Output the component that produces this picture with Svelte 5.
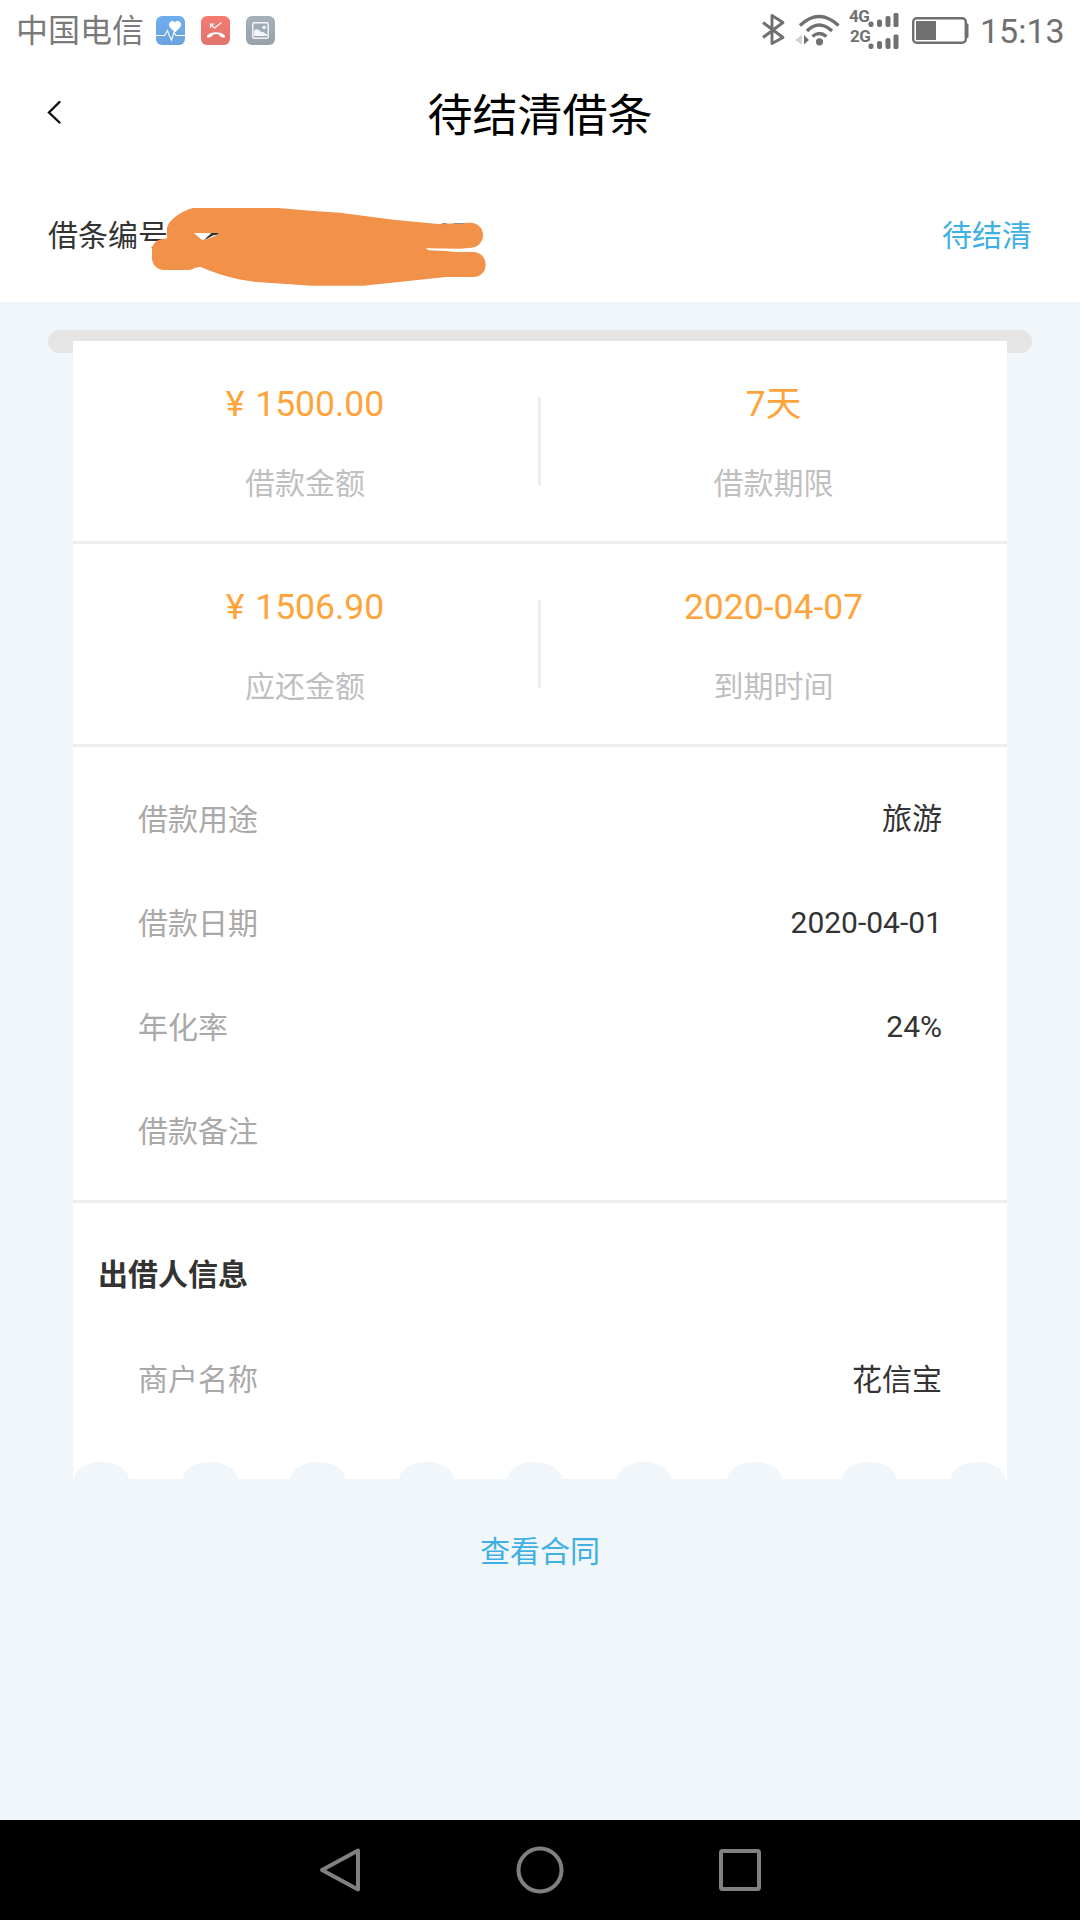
<script>
  const summary = [
    [
      { value: '¥ 1500.00', label: '借款金额' },
      { value: '7天', label: '借款期限' },
    ],
    [
      { value: '¥ 1506.90', label: '应还金额' },
      { value: '2020-04-07', label: '到期时间' },
    ],
  ];

  const details = [
    { label: '借款用途', value: '旅游' },
    { label: '借款日期', value: '2020-04-01' },
    { label: '年化率', value: '24%' },
    { label: '借款备注', value: '' },
  ];

  // centres of the scallops cut out of the lower edge of the card
  const scallops = [28.5, 137, 245, 353.5, 461.5, 571, 681.5, 796, 905];
</script>

<div class="screen">
  <header class="status">
    <span class="carrier">中国电信</span>
    <svg class="app" viewBox="0 0 29 29">
      <defs>
        <linearGradient id="blue" x2="0" y2="1"><stop stop-color="#70aeef" /><stop offset="1" stop-color="#6aa2dc" /></linearGradient>
      </defs>
      <rect width="29" height="29" rx="6" fill="url(#blue)" />
      <path d="M19 16.500L14 11.500C11 8 15.500 2.500 19 6.500C22.500 2.500 27.500 8 24 11.500Z" fill="#fff" />
      <path d="M0 19.500H8.500L9.500 18L11.500 14.500L13 19L15.500 24L18 16.500L20 19.500H29" fill="none" stroke="#fff" stroke-width="1.100" />
    </svg>
    <svg class="app" viewBox="0 0 29 29">
      <defs>
        <linearGradient id="red" x2="0" y2="1"><stop stop-color="#f47b72" /><stop offset="1" stop-color="#e0746e" /></linearGradient>
      </defs>
      <rect width="29" height="29" rx="6" fill="url(#red)" />
      <path d="M9.500 12V8H13.500M9.500 8L13.500 12L20.500 6.500" fill="none" stroke="#fff" stroke-width="1.200" />
      <path d="M6.200 19.500C9 15 21 15 23.800 19.500C24.500 21 23.500 22 22 21.500C19.500 20.800 18.500 20.300 18.300 18.800C16 18.200 14 18.200 11.800 18.800C11.500 20.300 10.500 20.800 8 21.500C6.500 22 5.500 21 6.200 19.500Z" fill="#fff" />
    </svg>
    <svg class="app" viewBox="0 0 29 29">
      <defs>
        <linearGradient id="grey" x2="0" y2="1"><stop stop-color="#a5b1b9" /><stop offset="1" stop-color="#98a1a9" /></linearGradient>
      </defs>
      <rect width="29" height="29" rx="6" fill="url(#grey)" />
      <rect x="6.800" y="6.800" width="15.400" height="15.400" rx="1.500" fill="none" stroke="#f3f5f6" stroke-width="1.500" />
      <path d="M8 14.500C10 12.500 12 13 14 15C15.500 16.500 17 15 21 18.500V20H8Z" fill="#f3f5f6" />
      <circle cx="18" cy="11.500" r="1.800" fill="#f3f5f6" />
    </svg>
    <svg class="system" viewBox="0 0 215 60">
      <g fill="none" stroke="#707070">
        <path d="M4 22.500L24 37.500L13 43.500V15.500L24 22.500L4 37.500" stroke-width="2.900" stroke-linejoin="round" />
        <path d="M41 25.500Q60 7.500 79.500 25.500M48 31Q60 19 73 31M53.500 36.500Q60 30.500 67.500 36.500" stroke-width="3.400" />
        <rect x="154.200" y="18.200" width="52.600" height="24.600" rx="3.500" stroke-width="2.400" />
      </g>
      <g fill="#707070">
        <circle cx="60.500" cy="41.800" r="3.600" />
        <path d="M45 35L50 40L45 44.500Z" />
        <path d="M43 35L36 40L43 44.500Z" fill="#d2d2d2" />
        <text x="90" y="22">4G</text>
        <text x="91" y="42">2G</text>
        <rect x="109.500" y="21.500" width="5" height="5.500" rx="2" />
        <rect x="118" y="19.500" width="5" height="7.500" rx="2" />
        <rect x="126.500" y="16" width="5" height="11" rx="2" />
        <rect x="134.500" y="13" width="5" height="14" rx="1.500" />
        <rect x="109.500" y="43.500" width="5" height="5.500" rx="2" />
        <rect x="118" y="41" width="5" height="8" rx="2" />
        <rect x="126.500" y="38" width="5" height="11" rx="2" />
        <rect x="134.500" y="34.500" width="5" height="14.500" rx="1.500" />
        <rect x="157" y="21" width="20" height="19" />
        <rect x="206.500" y="23.500" width="3" height="14.500" rx="1" />
      </g>
    </svg>
    <span class="clock">15:13</span>
  </header>

  <div class="title-bar">
    <svg class="back" viewBox="0 0 14 24"><path d="M12.500 2L2 12.500L12.500 22.500" /></svg>
    <h1>待结清借条</h1>
  </div>

  <div class="number-row">
    <span>借条编号</span>
    <span class="state">待结清</span>
    <svg class="redaction" viewBox="0 0 1440 360">
      <path class="trace" d="M522 150L545 128L568 129L562 134L550 136L530 147Z" />
      <path
        class="blob"
        fill-rule="evenodd"
        d="M490 54H745L850 63L930 68L1090 89L1225 102L1320 98C1345 98 1359 115 1359 135C1359 155 1345 172 1325 173L1290 176L1187 175L1196 181L1250 183L1275 186H1330C1353 187 1367 203 1367 224C1367 245 1352 261 1330 261H1248L1170 269L1000 287H845L680 276C610 268 560 251 512 231C495 231 490 239 475 240H402C380 240 366 222 366 205V180C366 160 383 147 400 147L411 145V115C415 90 455 62 490 54ZM492 129L515 149L522 149L545 129ZM522 150L545 129L568 129L562 134L535 146Z"
      />
      <path class="faint" d="M1234 103L1238 99H1248L1253 103ZM1272 99H1302V102H1272Z" />
    </svg>
  </div>

  <main>
    <div class="rail">
      <section class="card">
        {#each summary as pair}
          <div class="pair">
            {#each pair as cell}
              <div class="cell">
                <b>{cell.value}</b>
                <span>{cell.label}</span>
              </div>
            {/each}
          </div>
        {/each}
        <div class="details">
          {#each details as row}
            <div class="row"><span>{row.label}</span><em>{row.value}</em></div>
          {/each}
        </div>
        <div class="lender">
          <h2>出借人信息</h2>
          <div class="row"><span>商户名称</span><em>花信宝</em></div>
        </div>
        <svg class="edge" viewBox="0 0 934 17">
          {#each scallops as cx}
            <ellipse {cx} cy="18" rx="27.500" ry="18" />
          {/each}
        </svg>
      </section>
    </div>
    <a class="contract" href="#contract">查看合同</a>
  </main>

  <nav>
    <svg viewBox="0 0 50 50"><path d="M43 5.500V44.500L7 25Z" /></svg>
    <svg viewBox="0 0 50 50"><circle cx="25" cy="25" r="21.500" /></svg>
    <svg viewBox="0 0 50 50"><rect x="6" y="6" width="38" height="38" rx="1.500" /></svg>
  </nav>
</div>

<style>
  :global(body) {
    margin: 0;
  }
  .screen {
    width: 1080px;
    height: 1920px;
    display: flex;
    flex-direction: column;
    overflow: hidden;
    background: #fff;
    color: #333;
    font: 30px/1 Roboto, 'Noto Sans CJK SC', sans-serif;
  }
  svg {
    display: block;
    flex: none;
  }
  .status {
    height: 60px;
    display: flex;
    align-items: center;
    box-sizing: border-box;
    padding: 0 16px;
    color: #707070;
  }
  .carrier {
    width: 140px;
    padding-top: 3px;
    font-size: 32px;
    color: #7a7a7a;
    line-height: 57px;
  }
  .app {
    width: 29px;
    height: 29px;
    margin-right: 16px;
  }
  .system {
    width: 215px;
    height: 60px;
    margin-left: auto;
  }
  .system text {
    font: 700 17px Roboto, sans-serif;
    letter-spacing: -0.5px;
  }
  .clock {
    width: 84px;
    margin-left: 6px;
    padding-top: 3px;
    font-size: 34px;
    line-height: 57px;
    white-space: nowrap;
  }
  .title-bar {
    height: 110px;
    display: grid;
    grid-template: 110px / 48px 1fr 48px;
    align-items: center;
  }
  .back {
    width: 14px;
    height: 24px;
    justify-self: end;
    margin: 0 -13px 6px 0;
    fill: none;
    stroke: #111;
    stroke-width: 2.4;
    stroke-linecap: round;
  }
  h1 {
    align-self: start;
    margin: 0;
    color: #000;
    font-size: 45px;
    font-weight: 400;
    line-height: 114px;
    text-align: center;
  }
  .number-row {
    position: relative;
    height: 132px;
    display: flex;
    justify-content: space-between;
    box-sizing: border-box;
    padding: 0 48px;
    line-height: 132px;
  }
  .state,
  .contract {
    color: #3fb0e3;
    text-decoration: none;
  }
  .redaction {
    position: absolute;
    left: 30px;
    top: 20px;
    width: 480px;
    height: 120px;
  }
  .blob {
    fill: #f2924a;
  }
  .trace {
    fill: #333;
  }
  .faint {
    fill: #9a8a80;
  }
  main {
    flex: 1;
    display: flex;
    flex-direction: column;
    align-items: center;
    padding-top: 28px;
    background: #f1f6fb;
  }
  .rail {
    width: 984px;
    height: 23px;
    border-radius: 12px;
    background: #e5e5e5;
    margin-bottom: 1126px;
  }
  .card {
    width: 934px;
    height: 1138px;
    margin: 11px auto 0;
    background: #fff;
    display: flex;
    flex-direction: column;
  }
  .pair {
    display: grid;
    grid-template-columns: 1fr 1fr;
    height: 200px;
    border-bottom: 3px solid #ededed;
    background: linear-gradient(#ededed, #ededed) 465px 56px / 3px 88px no-repeat;
  }
  .cell {
    display: flex;
    flex-direction: column;
    align-items: center;
    padding-top: 42px;
  }
  .cell:first-child {
    padding-right: 3px;
    word-spacing: 2px;
  }
  .cell b {
    height: 79px;
    color: #ffa43b;
    font-size: 35.5px;
    font-weight: 400;
    line-height: 42px;
  }
  .cell span {
    color: #bfbfbf;
    line-height: 43px;
  }
  .details {
    padding: 20px 0 17px;
    border-bottom: 3px solid #ededed;
  }
  .row {
    display: flex;
    justify-content: space-between;
    height: 104px;
    padding: 0 65px;
    line-height: 104px;
  }
  .row span {
    color: #a9a9a9;
    line-height: 105px;
  }
  em {
    font-style: normal;
  }
  .lender {
    flex: 1;
    padding-top: 19px;
  }
  .lender .row {
    padding-top: 1px;
  }
  .lender .row span {
    line-height: 104px;
  }
  h2 {
    margin: 0 0 0 25px;
    font-size: 30px;
    font-weight: 700;
    line-height: 105px;
  }
  .edge {
    width: 934px;
    height: 17px;
    fill: #f1f6fb;
  }
  .contract {
    line-height: 90px;
    margin-top: 28px;
  }
  nav {
    height: 100px;
    display: flex;
    align-items: center;
    justify-content: center;
    gap: 150px;
    background: #000;
  }
  nav svg {
    width: 50px;
    height: 50px;
    fill: none;
    stroke: #808080;
    stroke-width: 4;
    stroke-linejoin: round;
  }
</style>
